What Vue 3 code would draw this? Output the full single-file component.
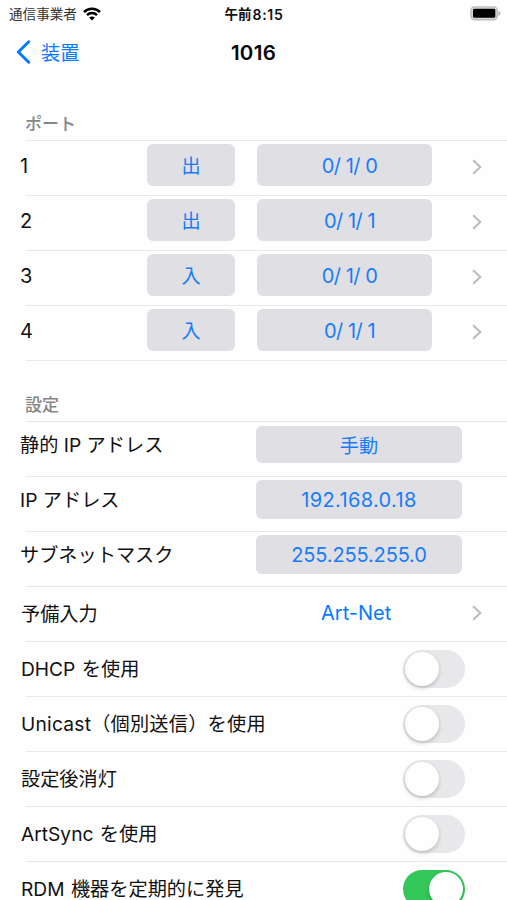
<script setup>
const ports = [
  { id: 1, direction: '出', address: '0/ 1/ 0' },
  { id: 2, direction: '出', address: '0/ 1/ 1' },
  { id: 3, direction: '入', address: '0/ 1/ 0' },
  { id: 4, direction: '入', address: '0/ 1/ 1' },
]

const network = [
  { label: '静的 IP アドレス', value: '手動', kind: 'mode' },
  { label: 'IP アドレス', value: '192.168.0.18', kind: 'host' },
  { label: 'サブネットマスク', value: '255.255.255.0', kind: 'mask' },
]

const switches = [
  { label: 'DHCP を使用', on: false },
  { label: 'Unicast（個別送信）を使用', on: false, wide: true },
  { label: '設定後消灯', on: false },
  { label: 'ArtSync を使用', on: false },
  { label: 'RDM 機器を定期的に発見', on: true },
]
</script>

<template>
  <main class="screen">
    <header class="status">
      <div class="carrier">
        <span>通信事業者</span>
        <svg class="wifi" viewBox="0 0 18 14" aria-hidden="true">
          <path d="M1 5.1C5.4.7 12.6.7 17 5.1" />
          <path d="M4 8.1c2.8-2.7 7.2-2.7 10 0" />
          <path class="wifi-core" d="M9 13.4 6.1 10.6c1.6-1.4 4.2-1.4 5.8 0Z" />
        </svg>
      </div>
      <div class="time">午前<span>8:15</span></div>
      <svg class="battery" viewBox="0 0 31 15" aria-hidden="true">
        <rect x=".9" y=".9" width="26.4" height="12.8" rx="3.6" fill="#d8d8d8" stroke="#bdbdbd" stroke-width="1.4" />
        <rect x="3" y="2.8" width="22.3" height="9" rx="1.4" fill="#000" />
        <path d="M28.5 5v5c2.4-.8 2.4-4.2 0-5Z" fill="#a8a8a8" />
      </svg>
    </header>

    <nav class="nav">
      <div class="back">
        <svg viewBox="0 0 15 24" aria-hidden="true"><path d="M12.7 1.8 2.3 12l10.4 10.2" /></svg>
        <span>装置</span>
      </div>
      <h1>1016</h1>
    </nav>

    <section class="ports">
      <h2>ポート</h2>
      <div v-for="port in ports" :key="port.id" class="row port">
        <span class="number">{{ port.id }}</span>
        <button class="direction">{{ port.direction }}</button>
        <button class="universe">{{ port.address }}</button>
        <svg class="chevron" viewBox="0 0 10 16" aria-hidden="true"><path d="m1.2 1.3 7 6.7-7 6.7" /></svg>
      </div>
      <div class="end"></div>
    </section>

    <section class="settings">
      <h2>設定</h2>
      <div v-for="item in network" :key="item.label" class="row net" :class="item.kind">
        <span class="label">{{ item.label }}</span>
        <button>{{ item.value }}</button>
      </div>
      <div class="row failover">
        <span class="label">予備入力</span>
        <span class="value">Art-Net</span>
        <svg class="chevron" viewBox="0 0 10 16" aria-hidden="true"><path d="m1.2 1.3 7 6.7-7 6.7" /></svg>
      </div>
      <div v-for="item in switches" :key="item.label" class="row option">
        <span class="label" :class="{ wide: item.wide }">{{ item.label }}</span>
        <span class="toggle" :class="{ on: item.on }"><i></i></span>
      </div>
    </section>
  </main>
</template>

<style>
body {
  background: #fefefe;
}
</style>

<style scoped>
.screen {
  width: 507px;
  height: 900px;
  overflow: hidden;
  background: #fefefe;
  color: #111;
  font-family: Inter, "Noto Sans CJK JP", sans-serif;
  font-size: 19.2px;
}
svg {
  display: block;
  fill: none;
  flex: none;
}
.status {
  display: grid;
  grid-template-columns: 1fr auto 1fr;
  align-items: center;
  height: 27px;
  padding: 0 6px 0 9px;
}
.carrier {
  display: flex;
  align-items: center;
  gap: 6px;
  font-size: 13.6px;
  line-height: 27px;
  color: #333;
}
.carrier span {
  padding-top: 1px;
}
.wifi {
  width: 18px;
  height: 14px;
  margin-bottom: 1px;
  stroke: #000;
  stroke-width: 2.5;
}
.wifi-core {
  fill: #000;
  stroke: none;
}
.time {
  display: flex;
  gap: 1px;
  padding: 0 2px 0 0;
  font-size: 13.5px;
  line-height: 27px;
  font-weight: 700;
  color: #111;
}
.time span {
  font-size: 14px;
  font-weight: 600;
  letter-spacing: 0.7px;
}
.battery {
  width: 31px;
  height: 15px;
  margin-bottom: 1px;
  justify-self: end;
}
.nav {
  display: grid;
  grid-template-columns: 1fr auto 1fr;
  align-items: center;
  height: 51px;
  padding: 0 16px;
  color: #067aff;
}
.back {
  display: flex;
  align-items: center;
  gap: 10px;
}
.back span {
  line-height: 28px;
}
.back svg {
  width: 15px;
  height: 24px;
  margin-bottom: 1px;
  stroke: #067aff;
  stroke-width: 3;
  stroke-linecap: round;
  stroke-linejoin: round;
}
h1 {
  margin: 0;
  font-size: 20.5px;
  line-height: 30px;
  font-weight: 600;
  letter-spacing: 0.3px;
  color: #050505;
}
h2 {
  margin: 0;
  padding-left: 25px;
  font-size: 17px;
  line-height: 24px;
  font-weight: 500;
  color: #858585;
}
.ports {
  padding-top: 34px;
}
.ports h2 {
  height: 28px;
}
.settings {
  padding-top: 32px;
}
.settings h2 {
  height: 28px;
}
.row {
  display: flex;
  align-items: flex-start;
  height: 55px;
  box-sizing: border-box;
  padding-left: 20px;
  background: linear-gradient(#e9e9eb, #e9e9eb) 26px 0 / 481px 1px no-repeat;
}
.end {
  height: 1px;
  margin-left: 26px;
  background: #e9e9eb;
}
button {
  border: 0;
  padding: 0;
  border-radius: 6px;
  background: #e0dfe4;
  color: #167dfa;
  font: inherit;
  flex: none;
}
.number {
  width: 127px;
  padding-top: 11px;
  line-height: 30px;
  font-size: 20px;
}
.port button {
  height: 42px;
  margin-top: 4px;
}
.port .direction {
  width: 88px;
}
.port .universe {
  width: 175px;
  margin-left: 22px;
  padding: 1px 0 0 10px;
  font-size: 20px;
  letter-spacing: -0.5px;
}
.chevron {
  width: 10px;
  height: 16px;
  margin: 19px 0 0 40px;
  stroke: #bebec0;
  stroke-width: 2.2;
}
.label {
  line-height: 22px;
  word-spacing: 1px;
  white-space: nowrap;
}
.label.wide {
  letter-spacing: 0.22px;
}
.net .label {
  width: 236px;
  padding-top: 13px;
  word-spacing: 0;
}
.net button {
  width: 206px;
  height: 39px;
  margin-top: 4px;
  font-size: 20px;
}
.net.host button {
  letter-spacing: 0.35px;
}
.net.mask button {
  letter-spacing: -0.15px;
}
.net.mode button {
  height: 37px;
  margin-top: 5px;
  font-size: 19.2px;
}
.failover,
.option {
  padding-left: 21px;
}
.failover .label {
  width: 300px;
  padding-top: 17px;
}
.value {
  width: 71px;
  padding-top: 12px;
  line-height: 30px;
  font-size: 20px;
  color: #067aff;
}
.failover .chevron {
  margin-left: 80px;
}
.option .label {
  width: 382px;
  padding-top: 17px;
}
.toggle {
  box-sizing: border-box;
  display: flex;
  width: 62px;
  height: 38px;
  margin-top: 9px;
  padding: 2px;
  border-radius: 19px;
  background: #e8e8ea;
}
.toggle i {
  width: 34px;
  height: 34px;
  border-radius: 50%;
  background: #fefefe;
  box-shadow: 0 2px 4px rgba(0, 0, 0, 0.2);
}
.toggle.on {
  justify-content: flex-end;
  background: #34c759;
}
</style>
